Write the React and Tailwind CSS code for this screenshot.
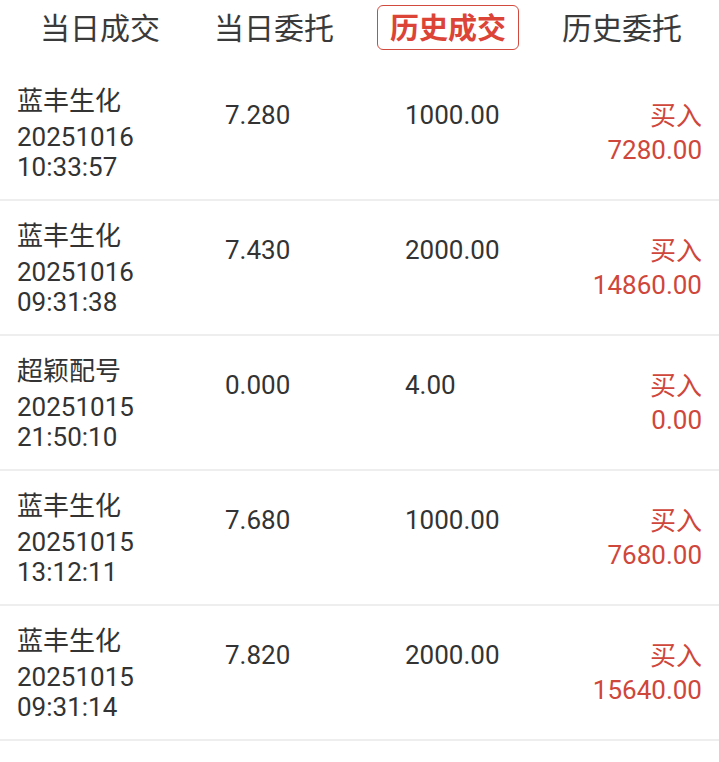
import React from "react";

const tabs = ["当日成交", "当日委托", "历史成交", "历史委托"];
const rows = [
  { name: "蓝丰生化", date: "20251016", time: "10:33:57", price: "7.280", qty: "1000.00", amt: "7280.00" },
  { name: "蓝丰生化", date: "20251016", time: "09:31:38", price: "7.430", qty: "2000.00", amt: "14860.00" },
  { name: "超颖配号", date: "20251015", time: "21:50:10", price: "0.000", qty: "4.00", amt: "0.00" },
  { name: "蓝丰生化", date: "20251015", time: "13:12:11", price: "7.680", qty: "1000.00", amt: "7680.00" },
  { name: "蓝丰生化", date: "20251015", time: "09:31:14", price: "7.820", qty: "2000.00", amt: "15640.00" },
];

export default function App() {
  return (
    <div
      className="w-[719px] h-[762px] bg-white text-[#333333]"
      style={{ fontFamily: 'Roboto, "Noto Sans CJK SC", sans-serif' }}
    >
      <div className="h-[66px] flex items-start pt-[5px] pl-[29px] gap-[32px]">
        {tabs.map((t, i) => (
          <div
            key={t}
            className={
              i === 2
                ? "w-[142px] h-[45px] flex items-center justify-center pt-[3px] rounded-[6px] border border-[#d2493e] text-[#dc4437] font-bold text-[29px] leading-none"
                : "w-[142px] h-[45px] flex items-center justify-center pt-[3px] rounded-[6px] border border-transparent text-[#3a3a3a] text-[30px] leading-none"
            }
          >
            {t}
          </div>
        ))}
      </div>
      {rows.map((r, i) => (
        <div key={i} className="h-[135px] flex border-b-2 border-[#eeeeee] text-[26px] leading-[30px]">
          <div className="w-[225px] pl-[17px] pt-[20px]">
            <div className="mb-[6px]">{r.name}</div>
            <div>{r.date}</div>
            <div>{r.time}</div>
          </div>
          <div className="w-[180px] pt-[34px]">{r.price}</div>
          <div className="flex-1 pt-[34px]">{r.qty}</div>
          <div className="pr-[17px] pt-[35px] text-right text-[#cf463b]">
            <div className="mb-[4px]">买入</div>
            <div>{r.amt}</div>
          </div>
        </div>
      ))}
    </div>
  );
}
